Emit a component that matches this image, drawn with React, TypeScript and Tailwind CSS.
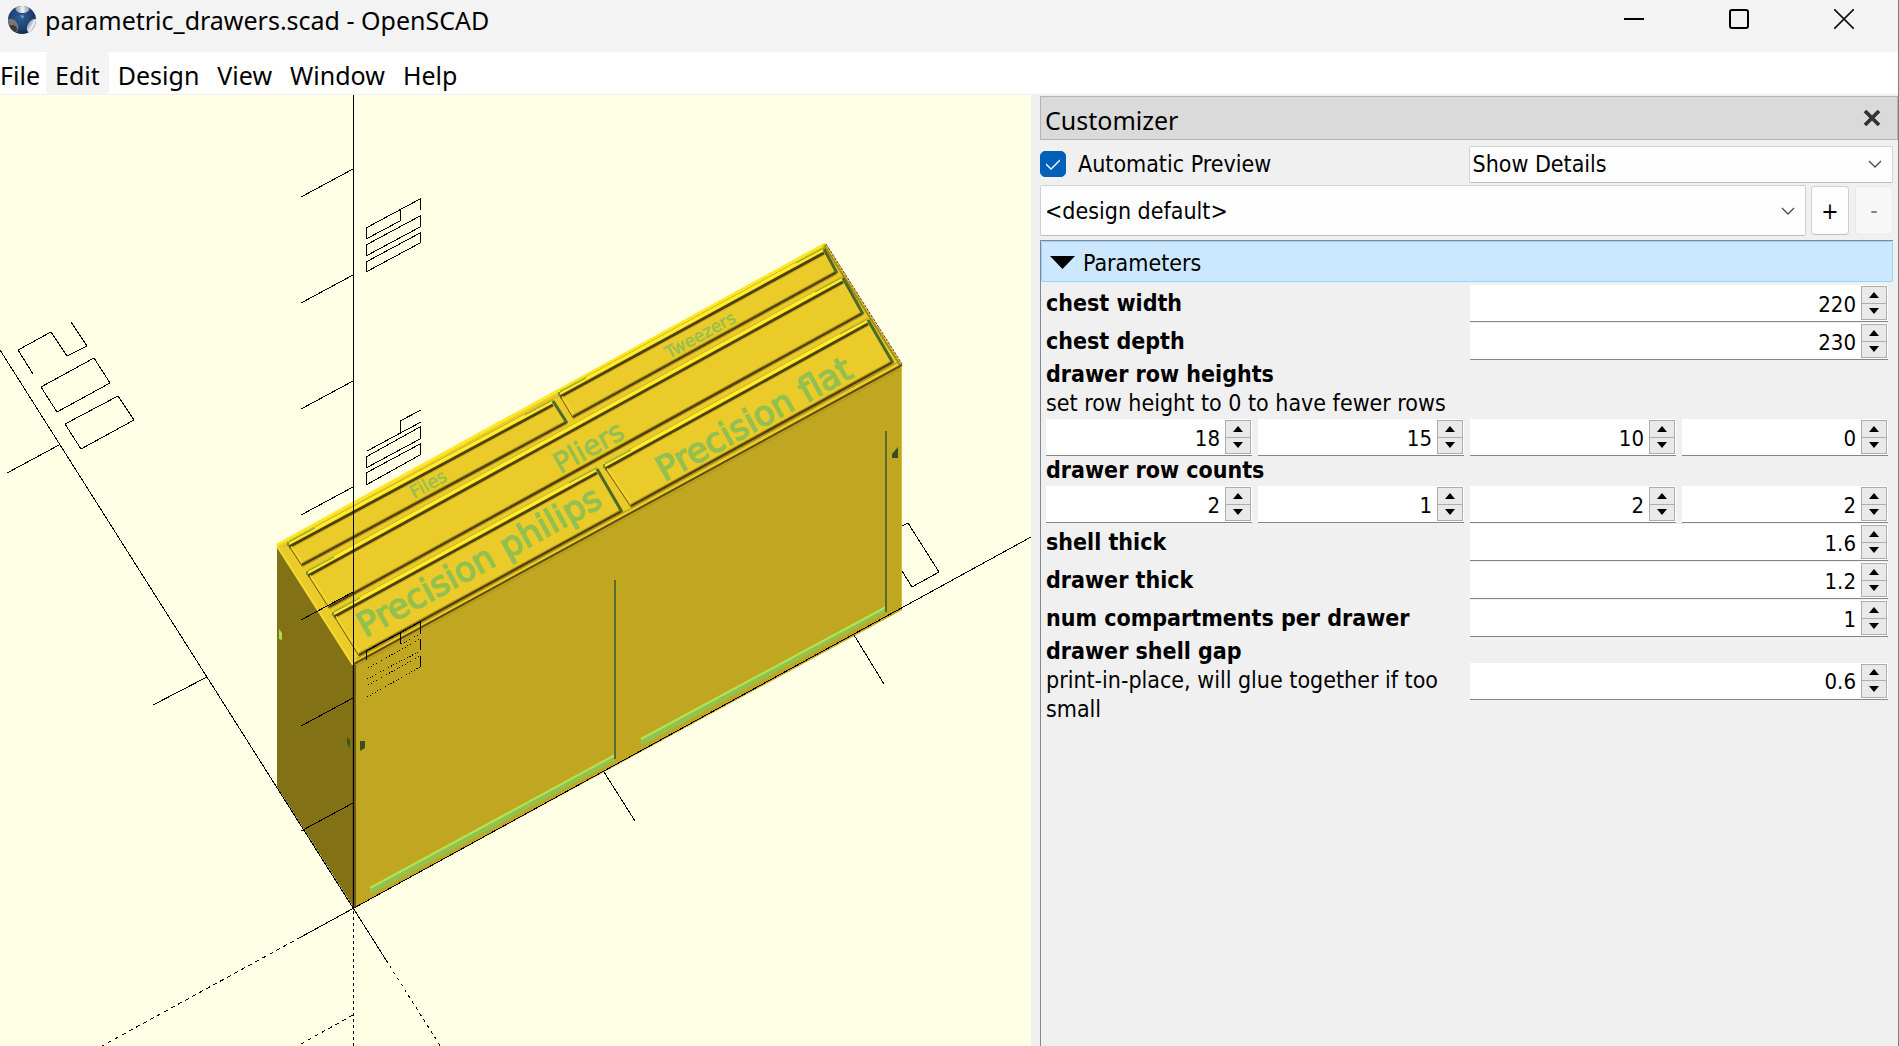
import React, { useState } from "react";

function LogoIcon() {
  return (
    <svg className="h-7 w-7 shrink-0" viewBox="0 0 28 28" aria-hidden="true">
      <defs>
        <radialGradient id="ball" cx="45%" cy="40%" r="60%">
          <stop offset="0" stopColor="#2b5f9a" />
          <stop offset="0.7" stopColor="#1d3f70" />
          <stop offset="1" stopColor="#15294a" />
        </radialGradient>
        <linearGradient id="hole" x1="0" y1="0" x2="1" y2="0">
          <stop offset="0" stopColor="#8b919f" />
          <stop offset="0.5" stopColor="#f2f3fa" />
          <stop offset="1" stopColor="#8a92a8" />
        </linearGradient>
        <clipPath id="ballClip">
          <circle cx="14" cy="14" r="14" />
        </clipPath>
      </defs>
      <circle cx="14" cy="14" r="14" fill="url(#ball)" />
      <g clipPath="url(#ballClip)">
        <ellipse cx="14.500" cy="3" rx="7" ry="4" fill="url(#hole)" />
        <ellipse cx="4" cy="20" rx="6" ry="7.500" fill="#77776f" transform="rotate(-30 4 20)" />
        <ellipse cx="4" cy="23" rx="5" ry="4" fill="#3a3c3a" />
        <ellipse cx="24.500" cy="20" rx="5" ry="7.500" fill="url(#hole)" transform="rotate(30 24.500 20)" />
        <path d="M12 9.500h4l-1 3z" fill="#93a1b8" />
      </g>
    </svg>
  );
}

const MENU = ["File", "Edit", "Design", "View", "Window", "Help"];

const FRAME_TICKS = [169, 275, 381, 487, 592, 698, 803];

/* Recessed drawer fronts: top-left, bottom-left, bottom-right, top-right */
const FRONTS: number[][][] = [
  [[289, 546], [302, 566], [567, 423], [553, 404]],
  [[560, 396], [573, 418], [837, 273], [824, 252]],
  [[308, 575], [329, 608], [863, 314], [843, 281]],
  [[334, 616], [359, 656], [622, 512], [597, 472]],
  [[605, 468], [631, 507], [893, 363], [868, 323]],
];

const LABELS = [
  { text: "Files", x: 414, y: 499, size: 18, stroke: 0.4 },
  { text: "Tweezers", x: 669, y: 359, size: 17, stroke: 0.4 },
  { text: "Pliers", x: 560, y: 474, size: 28, stroke: 0.8 },
  { text: "Precision philips", x: 365, y: 638, size: 34, stroke: 1.4 },
  { text: "Precision flat", x: 664, y: 482, size: 34, stroke: 1.4 },
];

function DrawerFront({ p }: { p: number[][] }) {
  const [tl, bl, br, tr] = p;
  const line = (a: number[], b: number[], dy: number) =>
    `M${a[0]} ${a[1] + dy}L${b[0]} ${b[1] + dy}`;
  return (
    <g fill="none">
      <path d={line(tl, tr, -5)} stroke="#c9a91c" strokeWidth="1" />
      <path d={line(tl, tr, -3)} stroke="#ffee2c" strokeWidth="3" />
      <path d={`M${tl[0]} ${tl[1] - 4}l26 -14`} stroke="#6f9c34" strokeWidth="1" />
      <path d={`M${tr[0]} ${tr[1] - 4}l-28 15`} stroke="#8aa030" strokeWidth="1" />
      <path d={line(tl, tr, 1)} stroke="#4d3f08" strokeWidth="3" />
      <path d={line(tl, tr, 3)} stroke="#c3a51d" strokeWidth="1" />
      <path d={line(tl, bl, 0)} stroke="#6f5b10" strokeWidth="1" />
      <path d={`M${tl[0] + 2} ${tl[1]}L${bl[0] + 2} ${bl[1] - 2}`} stroke="#fbe02c" strokeWidth="1" />
      <path d={line(bl, br, -3)} stroke="#b3951a" strokeWidth="1" />
      <path d={line(bl, br, -1)} stroke="#4d3f08" strokeWidth="2.500" />
      <path d={line(bl, br, 1)} stroke="#a98c18" strokeWidth="1" />
      <path d={`M${tr[0]} ${tr[1] - 3}L${br[0]} ${br[1]}`} stroke="#4b6a26" strokeWidth="3" />
      <path d={`M${tl[0] - 1} ${tl[1] - 4}v4`} stroke="#6f9c34" strokeWidth="2" />
    </g>
  );
}

function Viewport() {
  return (
    <svg
      className="block h-full w-full"
      viewBox="0 95 1031 951"
      preserveAspectRatio="xMinYMin slice"
      role="img"
      aria-label="3D preview of the drawer chest"
    >
      <rect x="0" y="95" width="1031" height="951" fill="#ffffe5" />

      <path d="M277 545L354 665V908L277 787Z" fill="#837215" />
      <path d="M354 664L902 365V610L354 908Z" fill="#c1a721" />
      <path d="M277 545L825 243L902 365L354 665Z" fill="#ebcb2a" />

      <g fill="none">
        <path d="M277 545L825 244" stroke="#ffe823" strokeWidth="3" />
        <path d="M283 547L825 249" stroke="#d3b423" strokeWidth="1" />
        <path d="M277 546L353 665" stroke="#f8d92e" strokeWidth="2" />
        <path d="M824 245L900 365" stroke="#a68a18" strokeWidth="2" />
        <path d="M826 244L902 364" stroke="#4a3d0c" strokeWidth="1" strokeDasharray="3 1" />
        <path d="M356 659L900 361" stroke="#b3951a" strokeWidth="1" />
        <path d="M354 664L902 365" stroke="#5f4e0a" strokeWidth="2" />
        <path d="M354 667L902 368" stroke="#ad941d" strokeWidth="1" />
      </g>

      {FRONTS.map((p, i) => (
        <DrawerFront key={i} p={p} />
      ))}

      <g fontFamily="'DejaVu Sans', sans-serif">
        {LABELS.map((l) => (
          <text
            key={l.text}
            x={l.x}
            y={l.y}
            fontSize={l.size}
            fill="#93c04f"
            stroke="#93c04f"
            strokeWidth={l.stroke}
            transform={`rotate(-29 ${l.x} ${l.y})`}
          >
            {l.text}
          </text>
        ))}
      </g>

      <path d="M370 887L615 754V761L370 895Z" fill="#94c04e" />
      <path d="M370 888L615 755" stroke="#b0e553" strokeWidth="2" />
      <path d="M641 738L886 606V612L641 746Z" fill="#94c04e" />
      <path d="M641 739L886 607" stroke="#b0e553" strokeWidth="2" />
      <rect x="614" y="580" width="2" height="179" fill="#556f2a" />
      <rect x="885" y="431" width="2" height="181" fill="#556f2a" />
      <rect x="901" y="366" width="1" height="243" fill="#d8bc3c" />
      <path d="M360 741h5v7l-5 3z" fill="#3a4f20" />
      <path d="M347 737l3 3v9l-3 -6z" fill="#3f5620" />
      <path d="M279 629l3 4v7l-3 -1z" fill="#a6de4f" />
      <path d="M898 447v11h-6v-4z" fill="#3a4f20" />
      <rect x="352" y="665" width="4" height="243" fill="#6e5c10" />

      <g fill="none" stroke="#000000" strokeWidth="1" shapeRendering="crispEdges">
        <path d="M353.500 95V908" />
        <path d="M353.500 911V1046" strokeDasharray="3 3" />
        <path d="M301 937L1031 537" />
        <path d="M301 937L100 1047" strokeDasharray="4 4" />
        <path d="M0 350L386 960" />
        <path d="M386 960L441 1047" strokeDasharray="3 4" />
        {FRAME_TICKS.map((y) => (
          <path key={y} d={`M353 ${y}L301 ${y + 28}`} />
        ))}
        <path d="M353 1015L301 1044" strokeDasharray="4 4" />
        <path d="M59 445L7 473M207 677L153 705" />
        <path d="M604 772L635 821M854 635L884 684" />
        <path d="M33 374L18 350L51 332L67 356L87 346L71 322" />
        <path d="M41 387L94 358L110 383L57 412Z" />
        <path d="M65 424L118 396L134 420L81 449Z" />
        <path d="M420 210V199L366 228V239L400 221V210" />
        <path d="M366 245L420 216V227L366 256Z" />
        <path d="M366 262L420 233V243L366 272Z" />
        <path d="M421 410L400 421V432M367 451L421 422" />
        <path d="M366 457L420 427V439L366 468Z" />
        <path d="M366 473L420 444V455L366 485Z" />
        <path d="M366 660V651L400 633V644M400 633L420 622V634" />
        <path d="M420 639V650M420 656V667" />
        <path
          d="M401 644L420 634M368 668L420 639M367 679L420 651M368 685L420 656M367 697L420 667"
          strokeDasharray="1 2"
        />
        <path d="M902 526L908 523L939 572L912 587L902 571" />
      </g>
    </svg>
  );
}

function Chevron() {
  return (
    <svg
      className="pointer-events-none absolute right-[11px] top-1/2 h-2 w-3.5 -translate-y-1/2"
      viewBox="0 0 14 8"
      fill="none"
      stroke="#4a4a4a"
      strokeWidth="1.300"
      aria-hidden="true"
    >
      <path d="M1 1l6 6 6-6" />
    </svg>
  );
}

function Spin({ label, value, step = 1 }: { label: string; value: string; step?: number }) {
  const [v, setV] = useState(value);
  const digits = step < 1 ? 1 : 0;
  const bump = (d: number) => setV((Number(v) + d * step).toFixed(digits));
  return (
    <div className="flex h-[38px] min-w-0 items-stretch pt-px">
      <div className="flex min-w-0 flex-1 border-b border-[#868686] bg-white">
        <input
          type="text"
          inputMode="decimal"
          aria-label={label}
          value={v}
          onChange={(e) => setV(e.target.value)}
          className="min-w-0 flex-1 bg-transparent pr-[5px] pt-0.5 text-right text-[22px] outline-none"
        />
        <div className="my-px mr-px flex w-[26px] flex-col border border-[#adadad] bg-[#e9e9e9]">
          <button
            type="button"
            aria-label={`Increase ${label}`}
            onClick={() => bump(1)}
            className="flex flex-1 items-center justify-center border-b border-[#adadad]"
          >
            <svg className="h-1.5 w-2.5" viewBox="0 0 10 6" aria-hidden="true">
              <path d="M5 0l5 6H0z" />
            </svg>
          </button>
          <button
            type="button"
            aria-label={`Decrease ${label}`}
            onClick={() => bump(-1)}
            className="flex flex-1 items-center justify-center"
          >
            <svg className="h-1.5 w-2.5" viewBox="0 0 10 6" aria-hidden="true">
              <path d="M5 6l5-6H0z" />
            </svg>
          </button>
        </div>
      </div>
    </div>
  );
}

function Row({ name, note, value, step }: { name: string; note?: string; value: string; step?: number }) {
  return (
    <div className="grid grid-cols-2 items-center gap-x-1.5">
      <div className="leading-[29px]">
        <p className="font-bold">{name}</p>
        {note && <p>{note}</p>}
      </div>
      <Spin label={name} value={value} step={step} />
    </div>
  );
}

function VectorRow({ name, note, values }: { name: string; note?: string; values: string[] }) {
  return (
    <div>
      <p className="font-bold leading-[29px]">{name}</p>
      {note && <p className="leading-[29px]">{note}</p>}
      <div className="grid grid-cols-4 gap-x-1.5">
        {values.map((v, i) => (
          <Spin key={i} label={`${name} ${i + 1}`} value={v} />
        ))}
      </div>
    </div>
  );
}

function Customizer() {
  const [auto, setAuto] = useState(true);
  return (
    <aside className="flex min-w-0 flex-[858] flex-col bg-[#f0f0f0] pl-[9px] pt-px font-['DejaVu_Sans_Condensed',sans-serif] text-[23px]">
      <div className="flex h-11 shrink-0 items-center justify-between border border-[#b4b4b4] bg-[#dadada] pl-1 pr-4">
        <h2 className="pt-1 font-['Noto_Sans',sans-serif] text-[25px] leading-none">Customizer</h2>
        <button type="button" aria-label="Close customizer">
          <svg className="h-[18px] w-[18px]" viewBox="0 0 18 18" stroke="#333333" strokeWidth="3.800" aria-hidden="true">
            <path d="M2 2l14 14M16 2L2 16" />
          </svg>
        </button>
      </div>

      <div className="flex min-h-0 flex-1 flex-col pr-[5px]">
        <div className="mt-1.5 grid h-[35px] shrink-0 grid-cols-2 gap-x-1">
          <label className="flex items-center gap-3">
            <input
              type="checkbox"
              checked={auto}
              onChange={(e) => setAuto(e.target.checked)}
              className="peer h-[26px] w-[26px] appearance-none rounded-[5px] border border-[#005fb8] bg-white checked:bg-[#005fb8]"
            />
            <svg
              className="pointer-events-none absolute ml-1.5 h-3.5 w-3.5"
              viewBox="0 0 14 14"
              fill="none"
              stroke="#ffffff"
              strokeWidth="1.300"
              aria-hidden="true"
            >
              <path d="M0 7l5 5 9-9" />
            </svg>
            Automatic Preview
          </label>
          <div className="relative">
            <select
              aria-label="Detail level"
              className="h-full w-full appearance-none rounded-xs border border-[#d4d4d4] border-b-[#bdbdbd] bg-[#fdfdfd] px-[3px]"
            >
              <option>Show Details</option>
            </select>
            <Chevron />
          </div>
        </div>

        <div className="mt-1 flex h-[51px] shrink-0 items-center">
          <div className="relative h-full min-w-0 flex-1">
            <select
              aria-label="Parameter set"
              className="h-full w-full appearance-none rounded-xs border border-[#d0d0d0] border-b-[#bdbdbd] bg-[#fdfdfd] px-1 pt-0.5"
            >
              <option>&lt;design default&gt;</option>
            </select>
            <Chevron />
          </div>
          <button
            type="button"
            aria-label="Add parameter set"
            className="ml-[5px] h-[49px] w-[38px] rounded border border-[#d0d0d0] border-b-[#bdbdbd] bg-[#fdfdfd] pt-0.5"
          >
            +
          </button>
          <button
            type="button"
            disabled
            aria-label="Remove parameter set"
            className="ml-1.5 h-[49px] w-[38px] rounded border border-[#e8e8e8] bg-[#f7f7f7] text-[#808080]"
          >
            -
          </button>
        </div>

        <div className="mt-1 flex-1 border-l border-t border-[#828790]">
          <button
            type="button"
            className="flex h-[41px] w-full items-center gap-2 rounded-xs border border-[#99d1ff] bg-[#cce8ff] pl-2 pt-1 text-left"
          >
            <svg className="mb-0.5 h-[13px] w-[25px]" viewBox="0 0 25 13" aria-hidden="true">
              <path d="M0 0h25L12.500 13z" />
            </svg>
            Parameters
          </button>
          <div className="mt-[2px] pl-[5px] pr-[5px]">
            <Row name="chest width" value="220" />
            <Row name="chest depth" value="230" />
            <VectorRow
              name="drawer row heights"
              note="set row height to 0 to have fewer rows"
              values={["18", "15", "10", "0"]}
            />
            <VectorRow name="drawer row counts" values={["2", "1", "2", "2"]} />
            <Row name="shell thick" value="1.6" step={0.1} />
            <Row name="drawer thick" value="1.2" step={0.1} />
            <Row name="num compartments per drawer" value="1" />
            <Row
              name="drawer shell gap"
              note="print-in-place, will glue together if too small"
              value="0.6"
              step={0.1}
            />
          </div>
        </div>
      </div>
    </aside>
  );
}

export default function App() {
  return (
    <div className="flex h-screen flex-col overflow-hidden border-r border-[#7c7c7c] bg-white font-['Noto_Sans',sans-serif] text-black">
      <header className="flex h-[52px] shrink-0 items-start justify-between bg-[#f3f3f3] pl-2">
        <div className="flex items-center gap-[9px] pt-[2px]">
          <LogoIcon />
          <h1 className="text-[25px] leading-[36px]">parametric_drawers.scad - OpenSCAD</h1>
        </div>
        <div className="flex items-center gap-[85px] pr-[44px] pt-[9px]">
          <button type="button" aria-label="Minimize">
            <svg className="h-5 w-5" viewBox="0 0 20 20" aria-hidden="true">
              <rect x="0" y="9" width="20" height="2" />
            </svg>
          </button>
          <button type="button" aria-label="Maximize">
            <svg className="h-5 w-5" viewBox="0 0 20 20" fill="none" stroke="#000000" strokeWidth="2" aria-hidden="true">
              <rect x="1" y="1" width="18" height="18" rx="2" />
            </svg>
          </button>
          <button type="button" aria-label="Close">
            <svg className="h-5 w-5" viewBox="0 0 20 20" stroke="#111111" strokeWidth="1.600" aria-hidden="true">
              <path d="M0 0l20 20M20 0L0 20" />
            </svg>
          </button>
        </div>
      </header>

      <nav className="flex h-[43px] shrink-0 border-b border-[#f0f0f4] pr-2">
        {MENU.map((m, i) => (
          <button
            key={m}
            type="button"
            className={
              "rounded pt-1 text-[25px] leading-[36px] " +
              (i === 0 ? "pr-1.5 " : "px-[9px] ") +
              (m === "Edit" ? "bg-[#f4f4f4]" : "")
            }
          >
            {m}
          </button>
        ))}
      </nav>

      <div className="flex min-h-0 flex-1">
        <main className="min-w-0 flex-[1031] overflow-hidden">
          <Viewport />
        </main>
        <Customizer />
      </div>
    </div>
  );
}
